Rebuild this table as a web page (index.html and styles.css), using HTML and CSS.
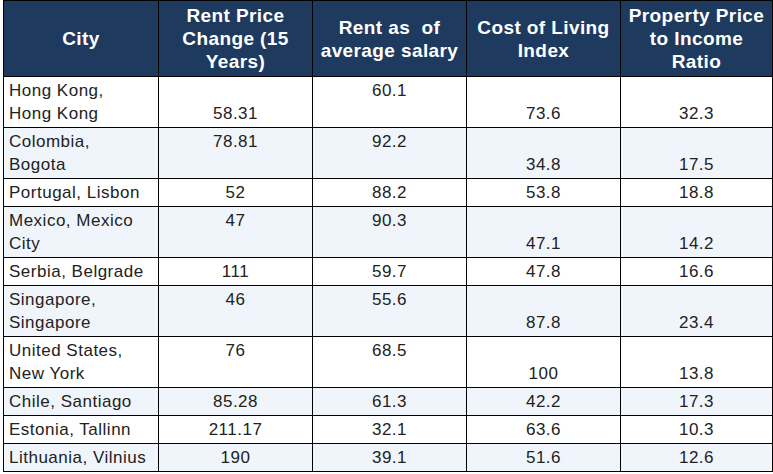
FILE: index.html
```html
<!DOCTYPE html>
<html lang="en">
<head>
<meta charset="utf-8">
<title>Rent data</title>
<link rel="stylesheet" href="styles.css">
</head>
<body>
<table class="data">
  <colgroup>
    <col class="c1"><col class="c2"><col class="c3"><col class="c4"><col class="c5">
  </colgroup>
  <thead>
    <tr>
      <th>City</th>
      <th>Rent Price<br>Change (15<br>Years)</th>
      <th>Rent as&nbsp; of<br>average salary</th>
      <th>Cost of Living<br>Index</th>
      <th>Property Price<br>to Income<br>Ratio</th>
    </tr>
  </thead>
  <tbody>
    <tr><td class="city">Hong Kong,<br>Hong Kong</td><td class="bot">58.31</td><td class="top">60.1</td><td class="bot">73.6</td><td class="bot">32.3</td></tr>
    <tr><td class="city">Colombia,<br>Bogota</td><td class="top">78.81</td><td class="top">92.2</td><td class="bot">34.8</td><td class="bot">17.5</td></tr>
    <tr><td class="city">Portugal, Lisbon</td><td>52</td><td>88.2</td><td>53.8</td><td>18.8</td></tr>
    <tr><td class="city">Mexico, Mexico<br>City</td><td class="top">47</td><td class="top">90.3</td><td class="bot">47.1</td><td class="bot">14.2</td></tr>
    <tr><td class="city">Serbia, Belgrade</td><td>111</td><td>59.7</td><td>47.8</td><td>16.6</td></tr>
    <tr><td class="city">Singapore,<br>Singapore</td><td class="top">46</td><td class="top">55.6</td><td class="bot">87.8</td><td class="bot">23.4</td></tr>
    <tr><td class="city">United States,<br>New York</td><td class="top">76</td><td class="top">68.5</td><td class="bot">100</td><td class="bot">13.8</td></tr>
    <tr><td class="city">Chile, Santiago</td><td>85.28</td><td>61.3</td><td>42.2</td><td>17.3</td></tr>
    <tr><td class="city">Estonia, Tallinn</td><td>211.17</td><td>32.1</td><td>63.6</td><td>10.3</td></tr>
    <tr><td class="city">Lithuania, Vilnius</td><td>190</td><td>39.1</td><td>51.6</td><td>12.6</td></tr>
  </tbody>
</table>
</body>
</html>
```
FILE: styles.css
```css
html, body {
  margin: 0;
  padding: 0;
  background: #ffffff;
}
body {
  font-family: "Liberation Sans", Arial, sans-serif;
}
.data {
  margin-left: 3px;
  border-collapse: collapse;
  table-layout: fixed;
  width: 769px;
}
.c1 { width: 155px; }
.c2 { width: 154px; }
.c3 { width: 154px; }
.c4 { width: 154px; }
.c5 { width: 152px; }
.data th,
.data td {
  border: 1px solid #000;
  padding: 2px 5px;
  line-height: 23px;
}
.data th {
  background: #1e3a5f;
  color: #ffffff;
  font-weight: bold;
  font-size: 19px;
  letter-spacing: 0.4px;
  text-align: center;
  vertical-align: middle;
  padding-top: 3px;
  padding-bottom: 3px;
  height: 69px;
}
.data td {
  font-size: 17px;
  letter-spacing: 0.5px;
  color: #222;
  text-align: center;
  vertical-align: bottom;
}
.data td.city {
  text-align: left;
  vertical-align: top;
  white-space: nowrap;
}
.data td.top { vertical-align: top; }
.data td.bot { vertical-align: bottom; }
.data tbody tr:nth-child(even) td {
  background: #f0f5fb;
}
```
